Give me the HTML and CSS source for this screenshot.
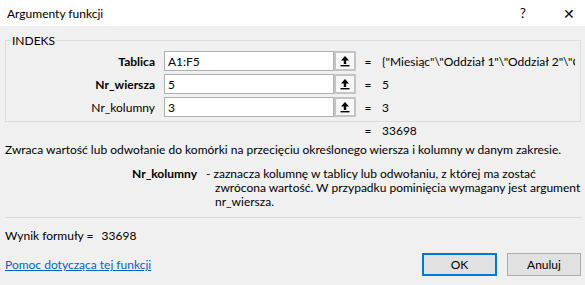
FILE: index.html
```html
<!DOCTYPE html>
<html lang="pl">
<head>
    <meta charset="UTF-8">
    <meta name="viewport" content="width=device-width, initial-scale=1.0">
    <title>Argumenty funkcji</title>
    <link rel="stylesheet" href="styles.css">
</head>
<body>
    <div class="dialog">
        <!-- Title bar -->
        <div class="titlebar">
            <span class="title">Argumenty funkcji</span>
            <span class="title-btn help">?</span>
            <span class="title-btn close">&#x2715;</span>
        </div>

        <div class="content">
            <!-- Function arguments -->
            <fieldset class="group">
                <legend>INDEKS</legend>
                <div class="args">
                    <label class="arg-name bold" for="arg-tablica">Tablica</label>
                    <input type="text" id="arg-tablica" value="A1:F5">
                    <button class="ref-btn" title="Zwiń okno dialogowe"><svg width="12" height="12" viewBox="0 0 12 12"><path d="M6 1 L10 5.5 H7.2 V9 H4.8 V5.5 H2 Z" fill="#000"/><rect x="1.5" y="10" width="9" height="1.4" fill="#000"/></svg></button>
                    <span class="eq">=</span>
                    <span class="arg-value">{"Miesiąc"\"Oddział 1"\"Oddział 2"\"Oddział 3"\"Oddział 4"}</span>

                    <label class="arg-name bold" for="arg-wiersz">Nr_wiersza</label>
                    <input type="text" id="arg-wiersz" value="5">
                    <button class="ref-btn" title="Zwiń okno dialogowe"><svg width="12" height="12" viewBox="0 0 12 12"><path d="M6 1 L10 5.5 H7.2 V9 H4.8 V5.5 H2 Z" fill="#000"/><rect x="1.5" y="10" width="9" height="1.4" fill="#000"/></svg></button>
                    <span class="eq">=</span>
                    <span class="arg-value">5</span>

                    <label class="arg-name" for="arg-kolumna">Nr_kolumny</label>
                    <input type="text" id="arg-kolumna" value="3">
                    <button class="ref-btn" title="Zwiń okno dialogowe"><svg width="12" height="12" viewBox="0 0 12 12"><path d="M6 1 L10 5.5 H7.2 V9 H4.8 V5.5 H2 Z" fill="#000"/><rect x="1.5" y="10" width="9" height="1.4" fill="#000"/></svg></button>
                    <span class="eq">=</span>
                    <span class="arg-value">3</span>
                </div>
            </fieldset>

            <div class="result-row">
                <span class="eq">=</span>
                <span class="arg-value">33698</span>
            </div>

            <p class="description">Zwraca wartość lub odwołanie do komórki na przecięciu określonego wiersza i kolumny w danym zakresie.</p>

            <div class="arg-help">
                <span class="bold help-name">Nr_kolumny</span>
                <p class="help-text">- zaznacza kolumnę w tablicy lub odwołaniu, z której ma zostać<br>zwrócona wartość. W przypadku pominięcia wymagany jest argument<br>nr_wiersza.</p>
            </div>

            <hr class="separator">

            <div class="formula-result">
                <span>Wynik formuły =</span>
                <span class="formula-value">33698</span>
            </div>

            <!-- Footer -->
            <div class="footer">
                <a href="#" class="help-link">Pomoc dotycząca tej funkcji</a>
                <button id="ok-btn" class="dlg-btn default">OK</button>
                <button id="cancel-btn" class="dlg-btn">Anuluj</button>
            </div>
        </div>
    </div>
</body>
</html>
```
FILE: styles.css
```css
body {
    margin: 0;
    padding: 0;
    font-family: Lato, "Noto Sans", sans-serif;
    font-size: 12px;
    color: #000;
    background-color: #f0f0f0;
}
.dialog {
    width: 585px;
    height: 285px;
    background-color: #f0f0f0;
    overflow: hidden;
}
.titlebar {
    height: 26px;
    background: #ffffff;
    display: flex;
    align-items: center;
    padding-left: 7px;
}
.title {
    flex: 1;
    font-size: 12px;
}
.title-btn {
    width: 20px;
    text-align: center;
    font-size: 13px;
}
.help {
    margin-right: 26px;
}
.close {
    margin-right: 6px;
    font-size: 14px;
}
.content {
    padding: 0 4px 0 5px;
}
.group {
    margin: 7px 0 0 0;
    padding: 3px 5px 4px 5px;
    border: 1px solid #dcdcdc;
    min-inline-size: 0;
}
.group legend {
    padding: 0 1px;
    line-height: 15px;
    color: #000;
}
.args {
    display: grid;
    grid-template-columns: 153px 170px 22px 24px minmax(0, 1fr);
    grid-auto-rows: 20px;
    row-gap: 3px;
    align-items: center;
}
.arg-name {
    text-align: right;
    padding-right: 9px;
}
.bold {
    font-weight: bold;
}
.args input {
    height: 20px;
    box-sizing: border-box;
    border: 1px solid #b0b0b0;
    padding: 0 3px;
    font-family: inherit;
    font-size: 12px;
    background: #ffffff;
    outline: none;
}
.ref-btn {
    width: 22px;
    height: 20px;
    box-sizing: border-box;
    border: 2px solid #c4c4c4;
    background: #f7f7f7;
    padding: 0;
    display: flex;
    align-items: center;
    justify-content: center;
}
.eq {
    text-align: center;
}
.arg-value {
    white-space: nowrap;
    overflow: hidden;
    padding-left: 2px;
}
.result-row {
    display: flex;
    margin-top: 2px;
    padding-left: 351px;
    line-height: 14px;
}
.result-row .eq {
    width: 24px;
}
.description {
    margin: 5px 0 0 0;
    line-height: 14px;
    white-space: nowrap;
}
.arg-help {
    display: grid;
    grid-template-columns: 192px 1fr;
    column-gap: 9px;
    margin-top: 10px;
    line-height: 14px;
}
.help-name {
    text-align: right;
}
.help-text {
    margin: 0;
    padding-left: 9px;
    text-indent: -9px;
    white-space: nowrap;
}
.separator {
    margin: 8px 0 0 0;
    border: none;
    border-top: 1px solid #dadada;
}
.formula-result {
    margin-top: 11px;
    line-height: 14px;
    display: flex;
}
.formula-value {
    margin-left: 8px;
}
.footer {
    display: flex;
    align-items: center;
    margin-top: 10px;
}
.help-link {
    flex: 1;
    color: #0066cc;
    text-decoration: underline;
}
.dlg-btn {
    width: 74px;
    height: 23px;
    box-sizing: border-box;
    background-color: #e1e1e1;
    border: 1px solid #adadad;
    font-family: inherit;
    font-size: 12px;
    color: #000;
    padding: 0;
    margin-left: 10px;
}
.dlg-btn.default {
    border: 2px solid #0078d7;
    width: 75px;
}
```
